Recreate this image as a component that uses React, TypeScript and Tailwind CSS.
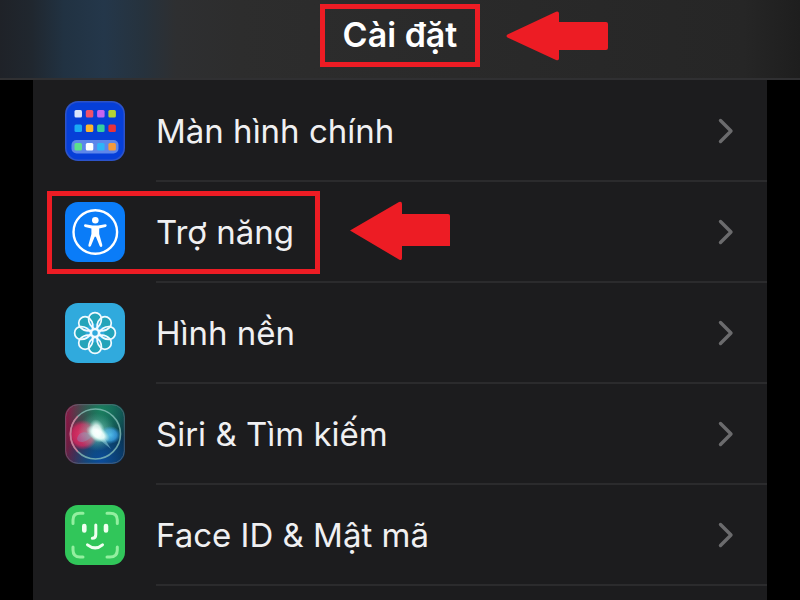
import type { ReactNode } from "react";

// Home screen icon: two rows of apps above a dock
function HomeScreenIcon() {
  const apps = [
    ["#d9e4fb", "#f0526a", "#c565f0", "#b5d334"],
    ["#19a9f5", "#fdb52c", "#35cf9f", "#e8323a"],
  ];
  const dock = ["#5be08a", "#ffffff", "#2db4f7", "#f59a3c"];

  return (
    <svg viewBox="0 0 60 60" className="size-15 shrink-0" aria-hidden="true">
      <rect width="60" height="60" rx="13" fill="#2c53c9" />
      <rect x="1.5" y="1.5" width="57" height="57" rx="12" fill="#063fd8" />
      {apps.map((row, r) =>
        row.map((color, c) => (
          <rect key={`${r}-${c}`} x={9.5 + c * 11.3} y={9 + r * 14.5} width="7.5" height="7.5" rx="1.5" fill={color} />
        ))
      )}
      <rect x="6.5" y="39" width="47" height="13.5" rx="5" fill="#5d86ea" />
      {dock.map((color, c) => (
        <rect key={c} x={9.5 + c * 11.3} y="42" width="7.5" height="7.5" rx="1.5" fill={color} />
      ))}
    </svg>
  );
}

function AccessibilityIcon() {
  return (
    <svg viewBox="0 0 60 60" className="size-15 shrink-0" aria-hidden="true">
      <rect width="60" height="60" rx="13" fill="#0a7cf8" />
      <circle cx="30.3" cy="30" r="21.8" fill="none" stroke="#fff" strokeWidth="2.4" />
      <circle cx="30.3" cy="18.3" r="3.3" fill="#fff" />
      <path
        d="M20.3 22.3 L27.5 23.6 H33 L40.3 22.3 Q41.6 22.3 41.7 23.5 Q41.7 24.5 40.6 24.9 L34.2 26.5 V32 L37.3 43 Q37.5 44.5 36.3 44.9 Q35.2 45 34.7 44 L30.9 34.8 H29.7 L25.9 44 Q25.3 45 24.3 44.8 Q23.1 44.4 23.4 43 L26.4 32 V26.5 L20 24.9 Q18.9 24.5 19 23.5 Q19.1 22.3 20.3 22.3 Z"
        fill="#fff"
      />
    </svg>
  );
}

// Eight overlapping petals around the centre
function WallpaperIcon() {
  const angles = [0, 45, 90, 135, 180, 225, 270, 315];

  return (
    <svg viewBox="0 0 60 60" className="size-15 shrink-0" aria-hidden="true">
      <rect width="60" height="60" rx="13" fill="#30aadd" />
      {angles.map((angle) => (
        <circle key={angle} transform={`rotate(${angle} 30 30)`} cx="30" cy="15.5" r="5.4" fill="#21a2b2" fillOpacity="0.8" />
      ))}
      {angles.map((angle) => (
        <path
          key={angle}
          transform={`rotate(${angle} 30 30)`}
          d="M30 26 C25 23.5 23.6 19.5 23.6 16 A6.4 6.4 0 0 1 36.4 16 C36.4 19.5 35 23.5 30 26 Z"
          fill="none"
          stroke="#f2fbff"
          strokeWidth="1.7"
        />
      ))}
      <circle cx="30" cy="30" r="3.6" fill="#30aadd" stroke="#f2fbff" strokeWidth="1.7" />
    </svg>
  );
}

function SiriIcon() {
  return (
    <svg viewBox="0 0 60 60" className="size-15 shrink-0" aria-hidden="true">
      <defs>
        <linearGradient id="siri-base" x1="0" y1="0.3" x2="1" y2="0.6">
          <stop offset="0" stopColor="#8b1644" />
          <stop offset="0.3" stopColor="#512640" />
          <stop offset="0.6" stopColor="#124a52" />
          <stop offset="1" stopColor="#083049" />
        </linearGradient>
        <radialGradient id="siri-green" cx="0.6" cy="0.1" r="0.6">
          <stop offset="0" stopColor="#19805f" />
          <stop offset="1" stopColor="#19805f" stopOpacity="0" />
        </radialGradient>
        <radialGradient id="siri-blue" cx="0.6" cy="0.95" r="0.6">
          <stop offset="0" stopColor="#0b4b9b" />
          <stop offset="1" stopColor="#0b4b9b" stopOpacity="0" />
        </radialGradient>
        <radialGradient id="siri-pink">
          <stop offset="0" stopColor="#e83a6d" />
          <stop offset="0.7" stopColor="#d82860" stopOpacity="0.8" />
          <stop offset="1" stopColor="#d82860" stopOpacity="0" />
        </radialGradient>
        <radialGradient id="siri-sky">
          <stop offset="0" stopColor="#4ab6f5" />
          <stop offset="0.6" stopColor="#3a9fe6" stopOpacity="0.8" />
          <stop offset="1" stopColor="#208ad8" stopOpacity="0" />
        </radialGradient>
        <radialGradient id="siri-glow">
          <stop offset="0" stopColor="#ffffff" />
          <stop offset="0.5" stopColor="#f2fffc" stopOpacity="0.95" />
          <stop offset="1" stopColor="#a9ece0" stopOpacity="0" />
        </radialGradient>
        <radialGradient id="siri-haze">
          <stop offset="0" stopColor="#a9f0dc" stopOpacity="0.8" />
          <stop offset="1" stopColor="#5fc6b0" stopOpacity="0" />
        </radialGradient>
      </defs>
      <rect width="60" height="60" rx="13" fill="url(#siri-base)" />
      <rect width="60" height="60" rx="13" fill="url(#siri-green)" />
      <rect width="60" height="60" rx="13" fill="url(#siri-blue)" />
      <rect x="0.7" y="0.7" width="58.6" height="58.6" rx="12.5" fill="none" stroke="#6a7180" strokeOpacity="0.6" />
      <circle cx="18" cy="31" r="15" fill="url(#siri-pink)" />
      <ellipse cx="45" cy="31" rx="11" ry="9" fill="url(#siri-sky)" />
      <path d="M12 35 C13 28 20 26 28 31 C22 39 13 40 12 35 Z" fill="#8591c8" fillOpacity="0.4" />
      <circle cx="32" cy="28" r="19" fill="url(#siri-haze)" />
      <path d="M30 32 L46 45 L36 29 Z" fill="#9adce9" fillOpacity="0.5" />
      <ellipse cx="33" cy="30" rx="13" ry="7" transform="rotate(28 33 30)" fill="url(#siri-glow)" />
      <ellipse cx="32" cy="27" rx="8" ry="12" transform="rotate(-12 32 27)" fill="url(#siri-glow)" fillOpacity="0.8" />
      <circle cx="30.5" cy="30" r="25" fill="none" stroke="#8cc5bd" strokeOpacity="0.75" strokeWidth="1.6" />
      <path d="M12.8 12.3 A25 25 0 0 0 12.8 47.7" fill="none" stroke="#df7195" strokeOpacity="0.75" strokeWidth="1.6" />
    </svg>
  );
}

function FaceIdIcon() {
  return (
    <svg viewBox="0 0 60 60" className="size-15 shrink-0" aria-hidden="true">
      <rect width="60" height="60" rx="13" fill="#31c65a" />
      <g fill="none" strokeLinecap="round">
        <path
          d="M8 18.5 V15 Q8 8.3 15 8.3 H18 M42 8.3 H45 Q52.3 8.3 52.3 15 V18.5 M52.3 42 V45 Q52.3 52 45 52 H42 M18 52 H15 Q8 52 8 45 V42"
          stroke="#93efa0"
          strokeWidth="3"
        />
        <path d="M19.3 21 V25.5 M41 21 V25.5" stroke="#effff0" strokeWidth="4.6" />
        <path d="M30.8 20 V29.5 Q30.8 33.3 27.3 33.3" stroke="#effff0" strokeWidth="3" />
        <path d="M22.5 39.8 Q30.3 46 37.5 39.8" stroke="#effff0" strokeWidth="3" />
      </g>
    </svg>
  );
}

function Chevron() {
  return (
    <svg viewBox="0 0 16 26" className="h-[26px] w-4 shrink-0" aria-hidden="true">
      <path d="M2.5 2.5 L13 13 L2.5 23.5" fill="none" stroke="#6b6b6d" strokeWidth="3.4" strokeLinecap="round" strokeLinejoin="round" />
    </svg>
  );
}

interface Setting {
  label: string;
  icon: ReactNode;
  highlighted?: boolean;
}

const settings: Setting[] = [
  { label: "Màn hình chính", icon: <HomeScreenIcon /> },
  { label: "Trợ năng", icon: <AccessibilityIcon />, highlighted: true },
  { label: "Hình nền", icon: <WallpaperIcon /> },
  { label: "Siri & Tìm kiếm", icon: <SiriIcon /> },
  { label: "Face ID & Mật mã", icon: <FaceIdIcon /> },
];

function SettingRow({ label, icon, highlighted }: Setting) {
  return (
    <li>
      <a href="#" className="flex h-[101px] items-stretch pl-8">
        <span className="relative flex items-center gap-[31px]">
          {icon}
          <span className="text-[33px] leading-10 whitespace-nowrap text-[#f0f0f2]">{label}</span>
          {highlighted && (
            <>
              {/* Red frame and arrow pointing at this row */}
              <span className="absolute top-2.5 -right-[26px] bottom-2 -left-[18px] border-5 border-[#ed1c24]" />
              <svg
                viewBox="0 0 100 60"
                className="absolute top-5 left-full ml-14 h-[60px] w-[100px]"
                aria-hidden="true"
              >
                <path d="M0 29.5 L49 1 Q52 0 52 3 V13 H98 Q100 13 100 15 V45 H52 V57 Q52 60 49 58.5 Z" fill="#ed1c24" />
              </svg>
            </>
          )}
        </span>
        <span className="flex grow items-center justify-end pr-[33px]">
          <Chevron />
        </span>
      </a>
      <div className="-mt-px ml-[123px] h-0.5 -mb-px bg-[#2b2b2d]" />
    </li>
  );
}

export default function App() {
  return (
    <div className="flex min-h-screen flex-col bg-black font-['Inter','Noto_Sans',sans-serif]">
      <header className="flex h-20 justify-center border-b-2 border-[#303032] bg-[linear-gradient(90deg,#1f2228_0%,#20272f_4%,#213242_8%,#24374a_13%,#26323d_18%,#2e2f31_22%,#2d2d2d_30%,#282828_75%,#262626_93%,#1e1e1e_100%)] pt-1">
        <div className="relative h-[63px] border-5 border-[#ed1c24] px-[18px]">
          <h1 className="text-[34px] leading-[52px] font-semibold whitespace-nowrap text-white">Cài đặt</h1>
          <svg
            viewBox="0 0 102 50"
            className="absolute top-0.5 left-full ml-[31px] h-[50px] w-[102px]"
            aria-hidden="true"
          >
            <path
              d="M1.5 23.5 L50 0.8 Q53 0 53 2.5 V11 H100 Q102 11 102 13 V37 Q102 39 100 39 H53 V47.5 Q53 50 50 49 L1.5 26.5 Q-0.5 25 1.5 23.5 Z"
              fill="#ed1c24"
            />
          </svg>
        </div>
      </header>

      <main className="mx-[33px] grow bg-[#1c1c1e]">
        <ul>
          {settings.map((setting) => (
            <SettingRow key={setting.label} {...setting} />
          ))}
        </ul>
      </main>
    </div>
  );
}
